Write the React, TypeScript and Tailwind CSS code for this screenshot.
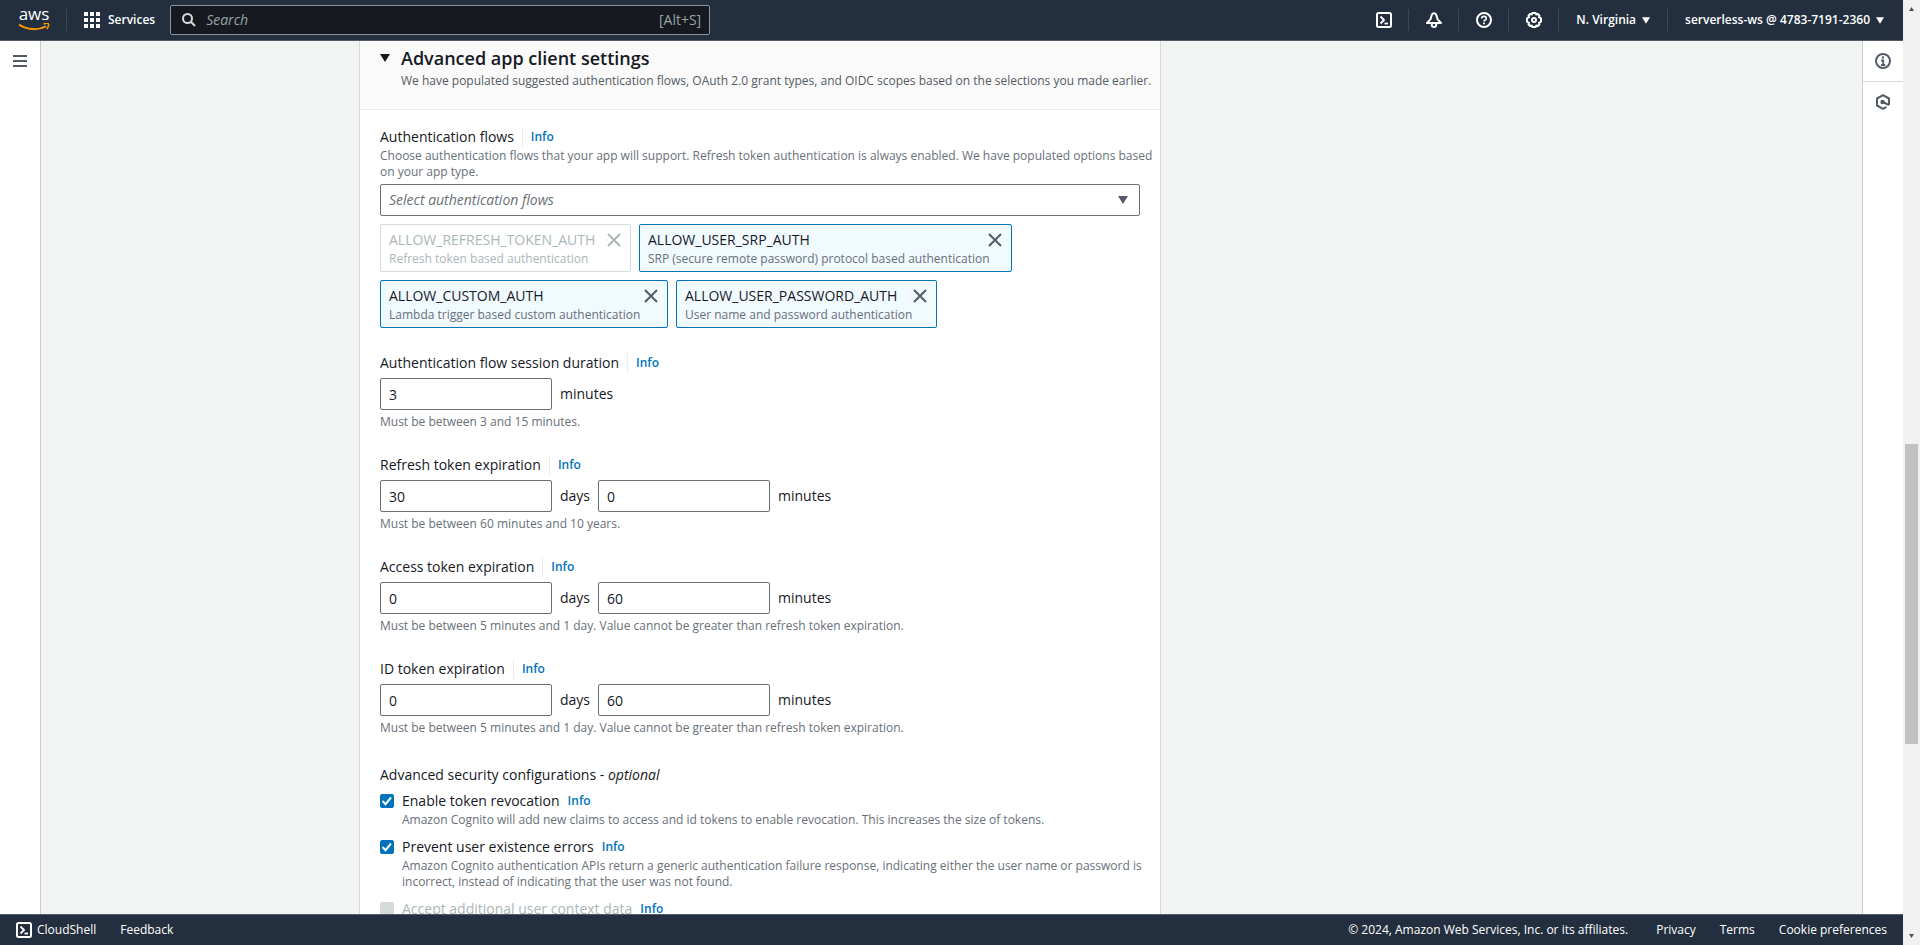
import type { ReactNode } from "react";

function CaretDown({ className }: { className: string }) {
  return (
    <svg viewBox="0 0 10 8" className={className} fill="currentColor" aria-hidden="true">
      <path d="M0 0h10L5 8z" />
    </svg>
  );
}

function CloseIcon() {
  return (
    <svg viewBox="0 0 14 14" className="size-3.5" fill="none" stroke="currentColor" strokeWidth="2" aria-hidden="true">
      <path d="M1 1l12 12M13 1L1 13" />
    </svg>
  );
}

function CloudShellIcon() {
  return (
    <svg viewBox="0 0 16 16" className="size-4" fill="none" stroke="currentColor" strokeWidth="2" aria-hidden="true">
      <rect x="1" y="1" width="14" height="14" rx="1.5" />
      <path d="M4.500 4.500L8 8l-3.500 3.500" strokeWidth="1.800" />
      <path d="M8.500 11.500h3.500" strokeWidth="1.800" />
    </svg>
  );
}

function BellIcon() {
  return (
    <svg viewBox="0 0 16 16" className="size-4" fill="none" stroke="currentColor" strokeWidth="2" strokeLinejoin="round" aria-hidden="true">
      <path d="M8 1.200c-1 0-2 .8-2.400 2.200L4.400 7.400 1 11h14l-3.400-3.600-1.200-4C10 2 9 1.200 8 1.200z" />
      <path d="M5.800 11.500v1.300a2.200 2.200 0 0 0 4.400 0v-1.300" />
    </svg>
  );
}

function HelpIcon() {
  return (
    <svg viewBox="0 0 16 16" className="size-4" fill="none" stroke="currentColor" strokeWidth="2" aria-hidden="true">
      <circle cx="8" cy="8" r="7" />
      <path d="M5.600 6.600c0-1.400 1-2.200 2.400-2.200s2.300.8 2.300 2c0 1.600-2.300 1.600-2.300 3.200" strokeWidth="1.600" />
      <path d="M8 10.600v1.600" strokeWidth="1.800" />
    </svg>
  );
}

function GearIcon() {
  return (
    <svg viewBox="0 0 16 16" className="size-4" fill="none" stroke="currentColor" strokeWidth="2" strokeLinejoin="round" aria-hidden="true">
      <path d="M6.400 1h3.200l.7 1.500 1.600-.500 1.600 1.600-.500 1.600L15 6.400v3.200l-2 1.200.500 1.600-1.600 1.600-1.600-.500L9.600 15H6.400l-.7-1.500-1.600.500-1.600-1.600.500-1.600L1 9.600V6.400l2-1.200-.500-1.600L4.100 2l1.600.500z" />
      <circle cx="8" cy="8" r="2" />
    </svg>
  );
}

function InfoCircleIcon() {
  return (
    <svg viewBox="0 0 16 16" className="size-4" fill="none" stroke="currentColor" strokeWidth="2" aria-hidden="true">
      <circle cx="8" cy="8" r="7" />
      <path d="M7 4.500h2M6 7.500h2.200v4M6 12h4.200" strokeWidth="1.800" />
    </svg>
  );
}

function HexagonIcon() {
  return (
    <svg viewBox="0 0 16 16" className="size-4" fill="none" stroke="currentColor" strokeWidth="2" strokeLinejoin="round" aria-hidden="true">
      <path d="M14 11V4.500L8 1.200 2 4.500v7l6 3.300 3.400-1.900" />
      <circle cx="7.500" cy="8" r="1.200" fill="currentColor" />
      <path d="M8 8l6 3.200" />
    </svg>
  );
}

function AwsLogo() {
  return (
    <a href="#home" aria-label="AWS home" className="flex w-8 flex-col items-center">
      <span className="h-3.5 text-[17px] leading-[10px] font-medium">aws</span>
      <svg viewBox="0 0 32 8" className="h-2 w-8" fill="none" stroke="#ff9900" aria-hidden="true">
        <path d="M1 1.500c8 5.600 19 6 27 1.800" strokeWidth="2" />
        <path d="M25.500 1c2-.8 4.500-.8 5 0 .5.900-.3 3.600-1.800 5" strokeWidth="1.400" />
      </svg>
    </a>
  );
}

function InfoLink({ topic }: { topic: string }) {
  return (
    <a href="#info" aria-label={`Info: ${topic}`} className="text-xs font-semibold text-[#0073bb]">
      Info
    </a>
  );
}

function FieldHeading({ children, topic, htmlFor }: { children: ReactNode; topic: string; htmlFor: string }) {
  return (
    <div className="flex h-[22px] items-center">
      <label htmlFor={htmlFor}>{children}</label>
      <span className="ml-2 flex h-5 items-center border-l border-[#eaeded] pl-2">
        <InfoLink topic={topic} />
      </span>
    </div>
  );
}

type TokenData = { name: string; description: string; disabled?: boolean; width: string };

const tokens: TokenData[] = [
  { name: "ALLOW_REFRESH_TOKEN_AUTH", description: "Refresh token based authentication", disabled: true, width: "w-[251px]" },
  { name: "ALLOW_USER_SRP_AUTH", description: "SRP (secure remote password) protocol based authentication", width: "w-[373px]" },
  { name: "ALLOW_CUSTOM_AUTH", description: "Lambda trigger based custom authentication", width: "w-[288px]" },
  { name: "ALLOW_USER_PASSWORD_AUTH", description: "User name and password authentication", width: "w-[261px]" },
];

function Token({ name, description, disabled, width }: TokenData) {
  const tone = disabled ? "border-[#d5dbdb] bg-white text-[#aab7b8]" : "border-[#0073bb] bg-[#f1faff] text-[#16191f]";
  return (
    <li className={`flex h-12 justify-between rounded-xs border pr-[9px] pl-2 whitespace-nowrap ${tone} ${width}`}>
      <div className="w-0 pt-1">
        <div className="leading-[22px]">{name}</div>
        <div className={`text-xs leading-4 ${disabled ? "" : "text-[#687078]"}`}>{description}</div>
      </div>
      <button type="button" disabled={disabled} aria-label={`Remove ${name}`} className={`mt-2 size-3.5 ${disabled ? "" : "text-[#545b64]"}`}>
        <CloseIcon />
      </button>
    </li>
  );
}

type Part = { id: string; value: string; unit: string };

function DurationField({ label, parts, hint }: { label: string; parts: Part[]; hint: string }) {
  return (
    <div>
      <FieldHeading topic={label} htmlFor={parts[0].id}>
        {label}
      </FieldHeading>
      <div className="mt-1 flex items-center gap-2">
        {parts.map((part) => (
          <div key={part.id} className="flex items-center gap-2">
            <input
              id={part.id}
              type="text"
              defaultValue={part.value}
              aria-label={`${label}, ${part.unit}`}
              className="h-8 w-[172px] rounded-xs border border-[#687078] bg-white px-2"
            />
            <span>{part.unit}</span>
          </div>
        ))}
      </div>
      <p className="mt-1 text-xs leading-4 text-[#687078]">{hint}</p>
    </div>
  );
}

function CheckOption({ id, label, children, checked, disabled }: { id: string; label: string; children?: ReactNode; checked?: boolean; disabled?: boolean }) {
  return (
    <div className="flex gap-2">
      <span className="relative mt-1 block size-3.5 shrink-0">
        <input
          id={id}
          type="checkbox"
          defaultChecked={checked}
          disabled={disabled}
          className="peer block size-3.5 appearance-none rounded-xs border border-[#687078] bg-white checked:border-[#0073bb] checked:bg-[#0073bb] disabled:border-[#d5dbdb] disabled:bg-[#d5dbdb]"
        />
        <svg viewBox="0 0 14 14" className="pointer-events-none absolute inset-0 hidden size-3.5 peer-checked:block" fill="none" stroke="white" strokeWidth="2" aria-hidden="true">
          <path d="M2.500 7l3 3.200L11 3.500" />
        </svg>
      </span>
      <div>
        <div className="flex h-[22px] items-center gap-2">
          <label htmlFor={id} className={disabled ? "text-[#aab7b8]" : ""}>
            {label}
          </label>
          <InfoLink topic={label} />
        </div>
        <p className="text-xs leading-4 whitespace-nowrap text-[#687078]">{children}</p>
      </div>
    </div>
  );
}

function HeaderAction({ label, children }: { label: string; children: ReactNode }) {
  return (
    <button type="button" aria-label={label} className="flex h-[22px] w-[50px] items-center justify-center border-r border-[#414750]">
      {children}
    </button>
  );
}

function TopBar() {
  return (
    <header className="flex h-[41px] shrink-0 items-center border-b border-[#545b64] bg-[#232f3e] text-white">
      <div className="flex h-[22px] items-center border-r border-[#414750] pr-4 pl-[18px]">
        <AwsLogo />
      </div>
      <button type="button" className="ml-[17px] flex items-center gap-2 text-xs font-semibold">
        <svg viewBox="0 0 16 16" className="size-4" fill="currentColor" aria-hidden="true">
          <path d="M0 0h4v4H0zM6 0h4v4H6zM12 0h4v4h-4zM0 6h4v4H0zM6 6h4v4H6zM12 6h4v4h-4zM0 12h4v4H0zM6 12h4v4H6zM12 12h4v4h-4z" />
        </svg>
        Services
      </button>
      <label className="ml-[15px] flex h-[30px] w-[540px] items-center rounded-xs border border-[#879596] bg-[#161a20] pr-2 pl-[11px]">
        <svg viewBox="0 0 14 14" className="size-3.5 text-[#d5dbdb]" fill="none" stroke="currentColor" strokeWidth="2" aria-hidden="true">
          <circle cx="5.500" cy="5.500" r="4.500" />
          <path d="M8.800 8.800L13 13" />
        </svg>
        <input type="search" aria-label="Search" placeholder="Search" className="ml-2.5 min-w-0 flex-1 bg-transparent outline-none placeholder:text-[#95a5a6] placeholder:italic" />
        <span className="text-[#95a5a6]">[Alt+S]</span>
      </label>
      <nav aria-label="Account" className="ml-auto flex items-center text-xs font-semibold">
        <HeaderAction label="CloudShell">
          <CloudShellIcon />
        </HeaderAction>
        <HeaderAction label="Notifications">
          <BellIcon />
        </HeaderAction>
        <HeaderAction label="Help">
          <HelpIcon />
        </HeaderAction>
        <HeaderAction label="Settings">
          <GearIcon />
        </HeaderAction>
        <button type="button" className="flex h-[22px] items-center gap-1.5 border-r border-[#414750] px-[17px]">
          N. Virginia
          <CaretDown className="h-[7px] w-2" />
        </button>
        <button type="button" className="flex h-[22px] items-center gap-1.5 pr-[19px] pl-[17px]">
          serverless-ws @ 4783-7191-2360
          <CaretDown className="h-[7px] w-2" />
        </button>
      </nav>
    </header>
  );
}

function SettingsCard() {
  return (
    <section className="ml-[318px] w-[802px] border-x border-[#d5dbdb] bg-white">
      <div className="flex gap-[11px] border-b border-[#eaeded] bg-[#fafafa] px-5 pt-1.5 pb-5">
        <CaretDown className="mt-[7px] h-2 w-2.5 shrink-0" />
        <div>
          <h2 className="text-lg leading-[22px] font-semibold">Advanced app client settings</h2>
          <p className="mt-1 text-xs leading-4 whitespace-nowrap text-[#545b64]">
            We have populated suggested authentication flows, OAuth 2.0 grant types, and OIDC scopes based on the selections you made earlier.
          </p>
        </div>
      </div>
      <form className="flex flex-col gap-6 px-5 pt-4">
        <div>
          <FieldHeading topic="Authentication flows" htmlFor="flows">
            Authentication flows
          </FieldHeading>
          <p className="text-xs leading-4 whitespace-nowrap text-[#687078]">
            Choose authentication flows that your app will support. Refresh token authentication is always enabled. We have populated options based
            <br />
            on your app type.
          </p>
          <div className="relative mt-1">
            <select id="flows" className="block h-8 w-full appearance-none rounded-xs border border-[#687078] bg-white px-2 text-[#687078] italic">
              <option>Select authentication flows</option>
            </select>
            <CaretDown className="pointer-events-none absolute top-3 right-3 h-2 w-2.5 text-[#545b64]" />
          </div>
          <ul className="mt-2 flex flex-wrap gap-2">
            {tokens.map((token) => (
              <Token key={token.name} {...token} />
            ))}
          </ul>
        </div>
        <DurationField label="Authentication flow session duration" parts={[{ id: "session-minutes", value: "3", unit: "minutes" }]} hint="Must be between 3 and 15 minutes." />
        <DurationField
          label="Refresh token expiration"
          parts={[
            { id: "refresh-days", value: "30", unit: "days" },
            { id: "refresh-minutes", value: "0", unit: "minutes" },
          ]}
          hint="Must be between 60 minutes and 10 years."
        />
        <DurationField
          label="Access token expiration"
          parts={[
            { id: "access-days", value: "0", unit: "days" },
            { id: "access-minutes", value: "60", unit: "minutes" },
          ]}
          hint="Must be between 5 minutes and 1 day. Value cannot be greater than refresh token expiration."
        />
        <DurationField
          label="ID token expiration"
          parts={[
            { id: "id-days", value: "0", unit: "days" },
            { id: "id-minutes", value: "60", unit: "minutes" },
          ]}
          hint="Must be between 5 minutes and 1 day. Value cannot be greater than refresh token expiration."
        />
        <fieldset className="pt-1">
          <legend className="contents">
            <span className="block leading-[22px]">
              Advanced security configurations - <em>optional</em>
            </span>
          </legend>
          <div className="mt-1 flex flex-col gap-2">
            <CheckOption id="revocation" label="Enable token revocation" checked>
              Amazon Cognito will add new claims to access and id tokens to enable revocation. This increases the size of tokens.
            </CheckOption>
            <CheckOption id="existence" label="Prevent user existence errors" checked>
              Amazon Cognito authentication APIs return a generic authentication failure response, indicating either the user name or password is
              <br />
              incorrect, instead of indicating that the user was not found.
            </CheckOption>
            <CheckOption id="context" label="Accept additional user context data" disabled />
          </div>
        </fieldset>
      </form>
    </section>
  );
}

function Footer() {
  return (
    <footer className="flex h-[31px] shrink-0 items-center border-t border-[#545b64] bg-[#232f3e] px-4 text-xs font-medium text-white">
      <a href="#cloudshell" className="flex items-center gap-[5px]">
        <CloudShellIcon />
        CloudShell
      </a>
      <a href="#feedback" className="ml-6">
        Feedback
      </a>
      <span className="ml-auto">© 2024, Amazon Web Services, Inc. or its affiliates.</span>
      <a href="#privacy" className="ml-7">
        Privacy
      </a>
      <a href="#terms" className="ml-6">
        Terms
      </a>
      <a href="#cookies" className="ml-6">
        Cookie preferences
      </a>
    </footer>
  );
}

function ScrollTrack() {
  return (
    <div aria-hidden="true" className="flex w-[17px] shrink-0 flex-col items-center justify-between bg-[#f1f1f1] py-[7px] text-[#505050]">
      <CaretDown className="h-1 w-[7px] rotate-180" />
      <div className="flex w-full flex-1 flex-col px-0.5">
        <div className="grow-[433]" />
        <div className="grow-[300] bg-[#c1c1c1]" />
        <div className="grow-[190]" />
      </div>
      <CaretDown className="h-1 w-[7px]" />
    </div>
  );
}

export default function App() {
  return (
    <div className="flex h-screen overflow-hidden font-['Open_Sans',sans-serif] text-sm leading-[22px] text-[#16191f]">
      <div className="flex min-w-0 flex-1 flex-col">
        <TopBar />
        <div className="flex min-h-0 flex-1">
          <aside className="w-[41px] shrink-0 border-r border-[#c8cfcf] bg-white pt-3.5 pl-[13px]">
            <button type="button" aria-label="Open navigation" className="block text-[#545b64]">
              <svg viewBox="0 0 14 12" className="h-3 w-3.5" fill="currentColor" aria-hidden="true">
                <path d="M0 0h14v2H0zM0 5h14v2H0zM0 10h14v2H0z" />
              </svg>
            </button>
          </aside>
          <main className="min-w-0 flex-1 overflow-hidden bg-[#f2f3f3]">
            <SettingsCard />
          </main>
          <aside className="w-[41px] shrink-0 border-l border-[#c8cfcf] bg-white text-[#545b64]">
            <button type="button" aria-label="Open help panel" className="flex h-[41px] w-full items-center justify-center border-b border-[#d5dbdb]">
              <InfoCircleIcon />
            </button>
            <button type="button" aria-label="Open diagnostics panel" className="flex h-10 w-full items-center justify-center">
              <HexagonIcon />
            </button>
          </aside>
        </div>
        <Footer />
      </div>
      <ScrollTrack />
    </div>
  );
}
